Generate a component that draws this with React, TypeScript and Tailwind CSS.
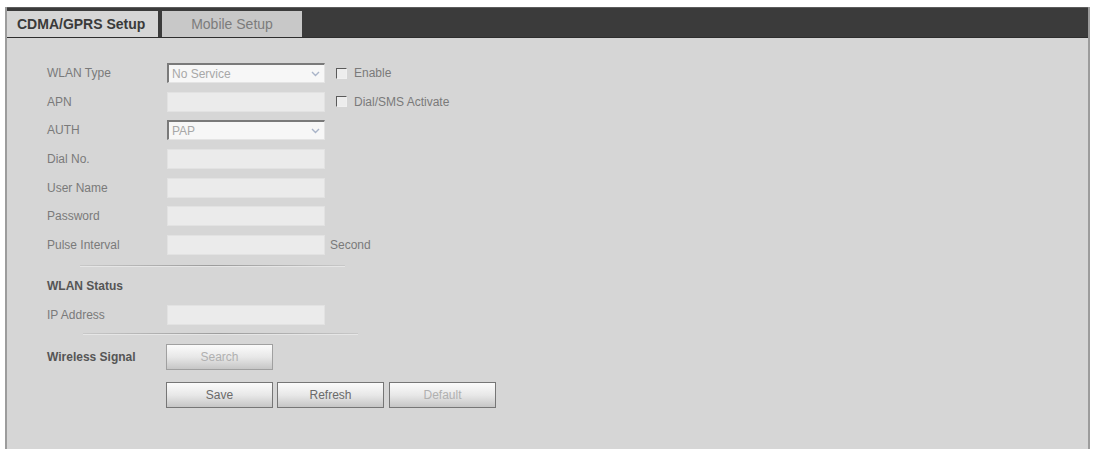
import React from "react";

const font = { fontFamily: '"Liberation Sans", Arial, sans-serif' };

function Label({ children, bold }: { children: React.ReactNode; bold?: boolean }) {
  return (
    <div className={`w-[120px] shrink-0 text-[12px] ${bold ? "font-bold text-[#555555]" : "text-[#7a7a7a]"}`}>
      {children}
    </div>
  );
}

function Select({ value }: { value: string }) {
  return (
    <div className="w-[158px] h-[20px] flex items-center justify-between bg-[#f7f7f7] border-t-2 border-l-2 border-t-[#7a7a7a] border-l-[#7a7a7a] border-r border-b border-r-[#e4e4e4] border-b-[#e4e4e4] pl-[3px] pr-[4px]">
      <span className="text-[12px] text-[#a8a8a8] leading-none">{value}</span>
      <svg width="9" height="6" viewBox="0 0 9 6">
        <path d="M1 1 L4.5 4.5 L8 1" fill="none" stroke="#a9b4c8" strokeWidth="1.4" />
      </svg>
    </div>
  );
}

function Input() {
  return <div className="w-[158px] h-[20px] bg-[#ebebeb] border border-[#e2e2e2]" />;
}

function Check({ label }: { label: string }) {
  return (
    <div className="flex items-center ml-[11px]">
      <div className="w-[11px] h-[11px] bg-[#ededed] border-t border-l border-t-[#5a5a5a] border-l-[#5a5a5a] border-r border-b border-r-[#f0f0f0] border-b-[#f0f0f0]" />
      <span className="ml-[7px] text-[12px] text-[#7a7a7a]">{label}</span>
    </div>
  );
}

function Btn({ children, dim, light }: { children: React.ReactNode; dim?: boolean; light?: boolean }) {
  return (
    <div
      className={`w-[107px] h-[26px] flex items-center justify-center border ${
        light ? "border-[#a0a0a0]" : "border-[#767676]"
      } bg-linear-to-b from-[#fbfbfb] via-[#e8e8e8] to-[#c6c6c6] text-[12px] ${dim ? "text-[#b0b0b0]" : "text-[#6a6a6a]"}`}
    >
      {children}
    </div>
  );
}

function Row({ children }: { children: React.ReactNode }) {
  return <div className="h-[28.6px] flex items-center">{children}</div>;
}

function Sep({ className }: { className: string }) {
  return (
    <div className={`h-[2px] flex flex-col ${className}`}>
      <div className="h-px bg-linear-to-r from-[#c8c8c8] via-[#9c9c9c] to-[#c8c8c8]" />
      <div className="h-px bg-[#e6e6e6]" />
    </div>
  );
}

export default function App() {
  return (
    <div className="w-[1095px] h-[451px] bg-white pt-[7px] pl-[5px]" style={font}>
      <div className="w-[1085px] h-[442px] bg-[#d6d6d6] border-l-2 border-r-2 border-[#9c9c9c] flex flex-col">
        <div className="h-[31px] bg-[#3b3b3b] border-t border-t-[#5c5c5c] border-b border-b-[#2e2e2e] flex items-end gap-[4px]">
          <div className="w-[151px] h-[26px] bg-[#d6d6d6] flex items-center pl-[10px] text-[14px] font-bold text-[#3a3a3a]">
            CDMA/GPRS Setup
          </div>
          <div className="w-[140px] h-[26px] bg-[#c8c8c8] flex items-center justify-center text-[14px] text-[#7c7c7c]">
            Mobile Setup
          </div>
        </div>

        <div className="pl-[40px] pt-[21px] flex flex-col">
          <Row>
            <Label>WLAN Type</Label>
            <Select value="No Service" />
            <Check label="Enable" />
          </Row>
          <Row>
            <Label>APN</Label>
            <Input />
            <Check label="Dial/SMS Activate" />
          </Row>
          <Row>
            <Label>AUTH</Label>
            <Select value="PAP" />
          </Row>
          <Row>
            <Label>Dial No.</Label>
            <Input />
          </Row>
          <Row>
            <Label>User Name</Label>
            <Input />
          </Row>
          <Row>
            <Label>Password</Label>
            <Input />
          </Row>
          <Row>
            <Label>Pulse Interval</Label>
            <Input />
            <span className="ml-[5px] text-[12px] text-[#7a7a7a]">Second</span>
          </Row>

          <Sep className="mt-[6px] ml-[33px] w-[265px]" />

          <div className="mt-[5px] h-[28.5px] flex items-center">
            <Label bold>WLAN Status</Label>
          </div>
          <div className="h-[28.5px] flex items-center">
            <Label>IP Address</Label>
            <Input />
          </div>

          <Sep className="mt-[4px] ml-[36px] w-[275px]" />

          <div className="mt-[9px] h-[26px] flex items-center">
            <Label bold>Wireless Signal</Label>
            <div className="-ml-[1px]">
              <Btn light dim>Search</Btn>
            </div>
          </div>

          <div className="mt-[12px] h-[26px] flex items-center pl-[119px] gap-[4px]">
            <Btn>Save</Btn>
            <Btn>Refresh</Btn>
            <div className="ml-[1px]">
              <Btn dim>Default</Btn>
            </div>
          </div>
        </div>
      </div>
    </div>
  );
}
